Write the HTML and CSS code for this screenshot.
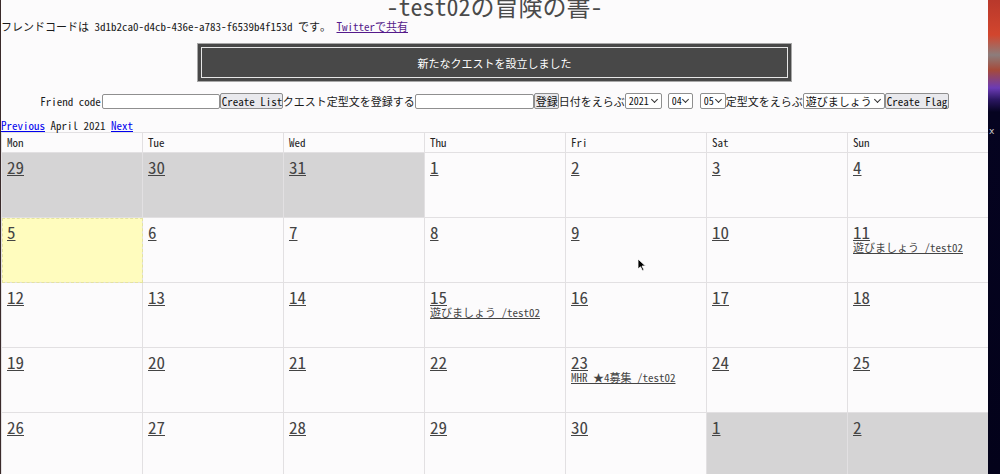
FILE: index.html
```html
<!DOCTYPE html>
<html lang="ja">
<head>
<meta charset="utf-8">
<title>-test02の冒険の書-</title>
<link rel="stylesheet" href="styles.css">
</head>
<body>
<div class="screen">
  <main class="page">
    <h1 class="title">-test02の冒険の書-</h1>
    <p class="code">フレンドコードは 3d1b2ca0-d4cb-436e-a783-f6539b4f153d です。 <a class="visited" href="#">Twitterで共有</a></p>
    <div class="banner"><div class="banner-inner">新たなクエストを設立しました</div></div>
    <form class="controls">
      <label class="lbl lbl-friend">Friend code</label>
      <input class="field" type="text">
      <button class="btn btn-list" type="button">Create List</button>
      <span class="lbl">クエスト定型文を登録する</span>
      <input class="field field2" type="text">
      <button class="btn btn-reg" type="button">登録</button>
      <span class="lbl">日付をえらぶ</span>
      <span class="selwrap sw-year"><select class="sel"><option>2021</option></select></span>
      <span class="selwrap sw-m"><select class="sel"><option>04</option></select></span>
      <span class="selwrap sw-d"><select class="sel"><option>05</option></select></span>
      <span class="lbl">定型文をえらぶ</span>
      <span class="selwrap sw-text"><select class="sel sel-text"><option>遊びましょう</option></select></span>
      <button class="btn btn-flag" type="button">Create Flag</button>
    </form>
    <div class="nav"><a href="#">Previous</a> April 2021 <a href="#">Next</a></div>
    <table class="cal">
      <thead>
        <tr><th>Mon</th><th>Tue</th><th>Wed</th><th>Thu</th><th>Fri</th><th>Sat</th><th>Sun</th></tr>
      </thead>
      <tbody>
        <tr>
          <td class="other"><a class="day" href="#">29</a></td>
          <td class="other"><a class="day" href="#">30</a></td>
          <td class="other"><a class="day" href="#">31</a></td>
          <td><a class="day" href="#">1</a></td>
          <td><a class="day" href="#">2</a></td>
          <td><a class="day" href="#">3</a></td>
          <td><a class="day" href="#">4</a></td>
        </tr>
        <tr>
          <td class="today"><a class="day" href="#">5</a></td>
          <td><a class="day" href="#">6</a></td>
          <td><a class="day" href="#">7</a></td>
          <td><a class="day" href="#">8</a></td>
          <td><a class="day" href="#">9</a></td>
          <td><a class="day" href="#">10</a></td>
          <td><a class="day" href="#">11</a><a class="ev" href="#">遊びましょう /test02</a></td>
        </tr>
        <tr>
          <td><a class="day" href="#">12</a></td>
          <td><a class="day" href="#">13</a></td>
          <td><a class="day" href="#">14</a></td>
          <td><a class="day" href="#">15</a><a class="ev" href="#">遊びましょう /test02</a></td>
          <td><a class="day" href="#">16</a></td>
          <td><a class="day" href="#">17</a></td>
          <td><a class="day" href="#">18</a></td>
        </tr>
        <tr>
          <td><a class="day" href="#">19</a></td>
          <td><a class="day" href="#">20</a></td>
          <td><a class="day" href="#">21</a></td>
          <td><a class="day" href="#">22</a></td>
          <td><a class="day" href="#">23</a><a class="ev" href="#">MHR ★4募集 /test02</a></td>
          <td><a class="day" href="#">24</a></td>
          <td><a class="day" href="#">25</a></td>
        </tr>
        <tr>
          <td><a class="day" href="#">26</a></td>
          <td><a class="day" href="#">27</a></td>
          <td><a class="day" href="#">28</a></td>
          <td><a class="day" href="#">29</a></td>
          <td><a class="day" href="#">30</a></td>
          <td class="other"><a class="day" href="#">1</a></td>
          <td class="other"><a class="day" href="#">2</a></td>
        </tr>
      </tbody>
    </table>
  </main>
  <div class="desktop"><span class="close">x</span></div>
</div>
<svg class="cursor" width="10" height="14" viewBox="0 0 10 14"><path d="M1 1 L1 11 L3.5 8.8 L5.5 12.8 L7 12 L5 8 L8.5 8 Z" fill="#000" stroke="#fff" stroke-width="0.8"/></svg>
</body>
</html>
```
FILE: styles.css
```css
html, body {
  margin: 0;
  padding: 0;
  overflow: hidden;
  background: #050320;
}
body {
  font-family: "Noto Sans Mono CJK JP", "Liberation Mono", "Noto Sans CJK JP", monospace;
  font-size: 11px;
  color: #222;
  position: relative;
}
.screen {
  display: flex;
  width: 1000px;
  height: 474px;
}
.page {
  width: 988px;
  flex: none;
  background: #fcfbfc;
  border-left: 1px solid #3a2a2a;
  box-sizing: border-box;
  overflow: hidden;
}
.desktop {
  flex: 1;
  position: relative;
  background: linear-gradient(to bottom, #b9382b 0, #d2462e 35px, #8c7d7c 55px, #a64a3a 70px, #6b3bb5 88px, #2a1660 100px, #050320 112px, #03021a 100%);
}
.close {
  position: absolute;
  left: 1px;
  top: 126px;
  color: #ccc;
  font-size: 9px;
  font-family: "DejaVu Sans", sans-serif;
}
.title {
  margin: -8px 0 0;
  font-size: 24px;
  font-weight: normal;
  text-align: center;
  line-height: 27px;
  color: #4a4a4a;
}
.code {
  margin: 0;
  line-height: 14px;
  color: #1a1a1a;
}
.code a.visited {
  color: #551a8b;
}
.banner {
  width: 595px;
  margin: 10px auto 0;
  padding: 3px;
  background: #484848;
  border: 1px solid #a8a8a8;
  box-sizing: border-box;
  height: 39px;
}
.banner-inner {
  height: 31px;
  border: 1px solid #e6e6e6;
  box-sizing: border-box;
  color: #fff;
  display: flex;
  align-items: center;
  justify-content: center;
  font-size: 11px;
}
.controls {
  display: flex;
  justify-content: center;
  align-items: center;
  margin: 11px 0 0;
  height: 16px;
}
.lbl {
  white-space: nowrap;
  color: #1a1a1a;
}
.lbl-friend {
  margin-right: 1px;
}
.field {
  width: 118px;
  height: 15px;
  box-sizing: border-box;
  border: 1px solid #8f8f8f;
  border-radius: 2px;
  padding: 0 2px;
  margin: 0;
  background: #fff;
  font: inherit;
}
.field2 {
  width: 119px;
}
.btn {
  height: 16px;
  box-sizing: border-box;
  border: 1px solid #8f8f8f;
  border-radius: 2px;
  background: #e9e9ed;
  color: #111;
  font: inherit;
  padding: 0 1px;
  margin: 0;
  line-height: 13px;
  white-space: nowrap;
}
.btn-list { width: 63px; }
.btn-reg { width: 25px; }
.btn-flag { width: 64px; }
.selwrap {
  position: relative;
  display: inline-flex;
  height: 16px;
}
.selwrap::after {
  content: "";
  position: absolute;
  right: 5px;
  top: 4px;
  width: 4px;
  height: 4px;
  border-right: 1.2px solid #333;
  border-bottom: 1.2px solid #333;
  transform: rotate(45deg);
  pointer-events: none;
}
.sel {
  -webkit-appearance: none;
  appearance: none;
  width: 100%;
  height: 16px;
  box-sizing: border-box;
  border: 1px solid #8f8f8f;
  border-radius: 2px;
  background: #fff;
  font: inherit;
  font-size: 10px;
  line-height: 14px;
  padding: 0 0 0 3px;
  margin: 0;
  color: #111;
}
.sel-text { font-size: 11px; padding-left: 2px; }
.sw-year { width: 37px; margin-right: 6px; }
.sw-m { width: 25px; margin-right: 7px; }
.sw-d { width: 26px; }
.sw-text { width: 82px; }
.nav {
  margin-top: 10px;
  line-height: 13px;
}
.nav a {
  color: #0000ee;
}
.cal {
  width: 988px;
  table-layout: fixed;
  border-collapse: collapse;
  margin-top: 0;
}
.cal th, .cal td {
  border: 1px solid #e2e0e2;
  text-align: left;
  vertical-align: top;
  padding: 0 0 0 5px;
}
.cal th {
  font-weight: normal;
  height: 19px;
  line-height: 19px;
  color: #222;
}
.cal td {
  height: 65px;
  box-sizing: border-box;
  padding-top: 4px;
}
.cal td.other {
  background: #d5d4d5;
}
.cal td.today {
  background: #fffcbe;
  outline: 1px dashed #e4e3a0;
  outline-offset: -1px;
}
.day {
  display: block;
  width: max-content;
  font-size: 17px;
  line-height: 19px;
  color: #444;
}
.ev {
  display: block;
  width: max-content;
  font-size: 11px;
  line-height: 13px;
  color: #444;
}
.cursor {
  position: absolute;
  left: 637px;
  top: 258px;
}
```
